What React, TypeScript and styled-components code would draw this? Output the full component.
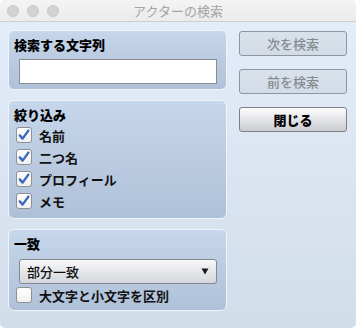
import React from "react";
import styled, { createGlobalStyle } from "styled-components";

const GlobalStyle = createGlobalStyle`
  html, body {
    margin: 0;
    padding: 0;
    background: #ffffff;
  }
  * {
    box-sizing: border-box;
  }
`;

const FONT = `"Noto Sans CJK JP", "Noto Sans", "Liberation Sans", sans-serif`;

const Window = styled.div`
  width: 356px;
  height: 328px;
  display: flex;
  flex-direction: column;
  border-radius: 5px;
  overflow: hidden;
  font-family: ${FONT};
  background: linear-gradient(#e4eefa, #d2ddea);
`;

const TitleBar = styled.div`
  height: 22px;
  flex-shrink: 0;
  display: flex;
  align-items: center;
  position: relative;
  background: linear-gradient(#f4f4f4, #ebebeb);
  border-bottom: 1px solid #cfcfcf;
`;

const Lights = styled.div`
  display: flex;
  gap: 8px;
  padding-left: 7px;
`;

const Light = styled.span`
  width: 12px;
  height: 12px;
  border-radius: 50%;
  background: #d3d3d3;
  border: 1px solid #c6c6c6;
`;

const WindowTitle = styled.div`
  position: absolute;
  left: 0;
  right: 0;
  text-align: center;
  font-size: 13px;
  color: #a4a4a4;
  line-height: 21px;
`;

const Body = styled.div`
  flex: 1;
  display: flex;
  gap: 12px;
  padding: 8px 0 0 8px;
`;

const LeftColumn = styled.div`
  width: 219px;
  display: flex;
  flex-direction: column;
  gap: 10px;
`;

const Panel = styled.section<{ $height: number }>`
  height: ${(p) => p.$height}px;
  border: 1px solid #f0f4fa;
  border-radius: 6px;
  background: linear-gradient(#c6d6eb, #afc1d8);
  padding: 5px 10px 0 10px;
  display: flex;
  flex-direction: column;
`;

const PanelTitle = styled.h2`
  margin: 0 0 0 -5px;
  font-size: 13px;
  font-weight: 900;
  line-height: 18px;
  color: #000;
`;

const TextField = styled.div`
  margin-top: 5px;
  height: 25px;
  width: 198px;
  background: #fff;
  border: 1px solid #8a8d92;
`;

const CheckList = styled.div`
  display: flex;
  flex-direction: column;
  gap: 6px;
  margin-top: 3px;
`;

const CheckRow = styled.label`
  display: flex;
  align-items: center;
  gap: 7px;
  height: 16px;
  margin-left: -3px;
  font-size: 13px;
  font-weight: 600;
  color: #111;
`;

const Box = styled.span`
  width: 16px;
  height: 16px;
  border: 1px solid #8e9094;
  border-radius: 3px;
  background: linear-gradient(#ffffff, #f0f0f0);
  display: flex;
  align-items: center;
  justify-content: center;
`;

const Select = styled.div`
  margin-top: 6px;
  height: 25px;
  width: 198px;
  border: 1px solid #85888d;
  border-radius: 3px;
  background: linear-gradient(#f7f7f8, #d4d7dc);
  display: flex;
  align-items: center;
  justify-content: space-between;
  padding: 0 7px 0 7px;
  font-size: 13px;
  font-weight: 500;
  color: #111;
`;

const RightColumn = styled.div`
  width: 108px;
  display: flex;
  flex-direction: column;
  gap: 13px;
  padding-top: 1px;
`;

const Button = styled.button<{ $disabled?: boolean }>`
  height: 25px;
  width: 108px;
  padding: 0;
  border-radius: 3px;
  font-family: ${FONT};
  font-size: 13px;
  border: 1px solid ${(p) => (p.$disabled ? "#8e959d" : "#7d8085")};
  background: ${(p) =>
    p.$disabled
      ? "linear-gradient(#d9e1eb, #d3dbe6)"
      : "linear-gradient(#fdfdfd, #c9ccd1)"};
  color: ${(p) => (p.$disabled ? "#868b92" : "#000")};
  font-weight: ${(p) => (p.$disabled ? 500 : 900)};
`;

function Check({ checked }: { checked: boolean }) {
  return (
    <Box>
      {checked && (
        <svg width="12" height="12" viewBox="0 0 12 12">
          <path
            d="M1.8 6.4 L4.6 9.6 L10.4 1.6"
            fill="none"
            stroke="#3c69bd"
            strokeWidth="2.4"
            strokeLinecap="round"
            strokeLinejoin="round"
          />
        </svg>
      )}
    </Box>
  );
}

const filters = ["名前", "二つ名", "プロフィール", "メモ"];

export default function App() {
  return (
    <Window>
      <GlobalStyle />
      <TitleBar>
        <Lights>
          <Light />
          <Light />
          <Light />
        </Lights>
        <WindowTitle>アクターの検索</WindowTitle>
      </TitleBar>
      <Body>
        <LeftColumn>
          <Panel $height={60}>
            <PanelTitle>検索する文字列</PanelTitle>
            <TextField />
          </Panel>
          <Panel $height={119}>
            <PanelTitle>絞り込み</PanelTitle>
            <CheckList>
              {filters.map((f) => (
                <CheckRow key={f}>
                  <Check checked />
                  {f}
                </CheckRow>
              ))}
            </CheckList>
          </Panel>
          <Panel $height={82}>
            <PanelTitle>一致</PanelTitle>
            <Select>
              <span>部分一致</span>
              <svg width="8" height="7" viewBox="0 0 8 7">
                <path d="M0.5 0.5 H7.5 L4 6.5 Z" fill="#1a1a1a" />
              </svg>
            </Select>
            <CheckList>
              <CheckRow>
                <Check checked={false} />
                大文字と小文字を区別
              </CheckRow>
            </CheckList>
          </Panel>
        </LeftColumn>
        <RightColumn>
          <Button $disabled>次を検索</Button>
          <Button $disabled>前を検索</Button>
          <Button>閉じる</Button>
        </RightColumn>
      </Body>
    </Window>
  );
}
